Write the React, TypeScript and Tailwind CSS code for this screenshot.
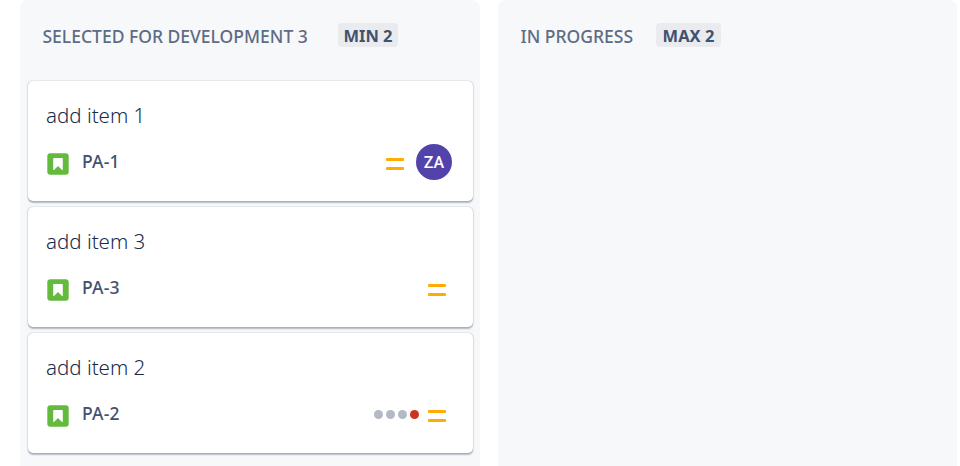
type Issue = { id: string; title: string; avatar?: string; aged?: boolean };

const items: Issue[] = [
  { id: "PA-1", title: "add item 1", avatar: "ZA" },
  { id: "PA-3", title: "add item 3" },
  { id: "PA-2", title: "add item 2", aged: true },
];

function StoryIcon() {
  return (
    <svg className="mt-1 h-[22px] w-[22px] shrink-0" viewBox="0 0 22 22">
      <rect x="0.3" y="0.3" width="21.4" height="21.4" rx="3" fill="#63ba3c" />
      <path d="M7 5h8q.8 0 .8.800v11.200h-.8L11 13l-4 4h-.8V5.800q0-.8.800-.8z" fill="#fff" />
    </svg>
  );
}

function MediumIcon() {
  return (
    <svg className="mt-1 h-[14px] w-[18px] shrink-0" viewBox="0 0 18 14">
      <rect x="0" y="1" width="18" height="3" rx="1" fill="#ffab00" />
      <rect x="0" y="10" width="18" height="3" rx="1" fill="#ffab00" />
    </svg>
  );
}

function Card({ item }: { item: Issue }) {
  return (
    <article className="h-[120px] rounded-[5px] bg-white pt-5 pr-[21px] pl-[18px] shadow-[0_1.5px_1.5px_rgba(9,30,66,0.28),0_0_1.5px_rgba(9,30,66,0.34)]">
      <h3 className="h-7 text-[20.5px] leading-7 font-light whitespace-nowrap text-[#172b4d]">{item.title}</h3>
      <div className="mt-[15px] flex h-9 items-center">
        <div className="pl-[1px]">
          <StoryIcon />
        </div>
        <span className="ml-[13px] pb-[2px] text-[17.5px] leading-6 font-medium tracking-[0.2px] text-[#42526e]">{item.id}</span>
        <div className="ml-auto flex items-center">
          {item.aged && (
            <div className="mt-[1px] mr-[9px] flex gap-[3px]">
              <i className="size-[9px] rounded-full bg-[#b3bac5]" />
              <i className="size-[9px] rounded-full bg-[#b3bac5]" />
              <i className="size-[9px] rounded-full bg-[#b3bac5]" />
              <i className="size-[9px] rounded-full bg-[#ca3521]" />
            </div>
          )}
          <div className={item.avatar ? "mr-3" : "mr-[6px]"}>
            <MediumIcon />
          </div>
          {item.avatar && (
            <span className="flex size-9 items-center justify-center rounded-full bg-[#5243aa] pt-px font-[Roboto,sans-serif] text-[16px] font-medium text-white">
              {item.avatar}
            </span>
          )}
        </div>
      </div>
    </article>
  );
}

function Limit({ text, className }: { text: string; className: string }) {
  return (
    <span className={`${className} flex h-6 items-center justify-center rounded-[4px] bg-[#e9ebee] pt-[2px] text-[16.5px] leading-6 font-bold whitespace-nowrap text-[#42526e]`}>
      {text}
    </span>
  );
}

export default function App() {
  return (
    <main className="flex h-[466px] w-[960px] gap-[18px] overflow-hidden bg-white pl-5 font-['Noto_Sans','Open_Sans',sans-serif]">
      <section className="h-full w-[460px] shrink-0 rounded-t-[8px] bg-[#f7f8fa] pt-[23px] pr-[7px] pl-2">
        <header className="flex h-6 items-center pl-[14px] text-[17.5px] font-medium whitespace-nowrap text-[#5e6c84]">
          <h2 className="w-[296px] pt-[2px] pl-[0.5px]">
            <span>SELECTED FOR DEVELOPMENT</span> <span>3</span>
          </h2>
          <Limit text="MIN 2" className="w-[60px]" />
        </header>
        <div className="mt-[34px] flex flex-col gap-[6px]">
          {items.map((item) => (
            <Card key={item.id} item={item} />
          ))}
        </div>
      </section>
      <section className="h-full w-[459px] shrink-0 rounded-t-[8px] bg-[#f7f8fa] pt-[23px]">
        <header className="flex h-6 items-center pl-[22px] text-[17.5px] font-medium whitespace-nowrap text-[#5e6c84]">
          <h2 className="w-[136px] pt-[2px] pl-[0.5px]">IN PROGRESS</h2>
          <Limit text="MAX 2" className="w-[65px]" />
        </header>
      </section>
    </main>
  );
}
